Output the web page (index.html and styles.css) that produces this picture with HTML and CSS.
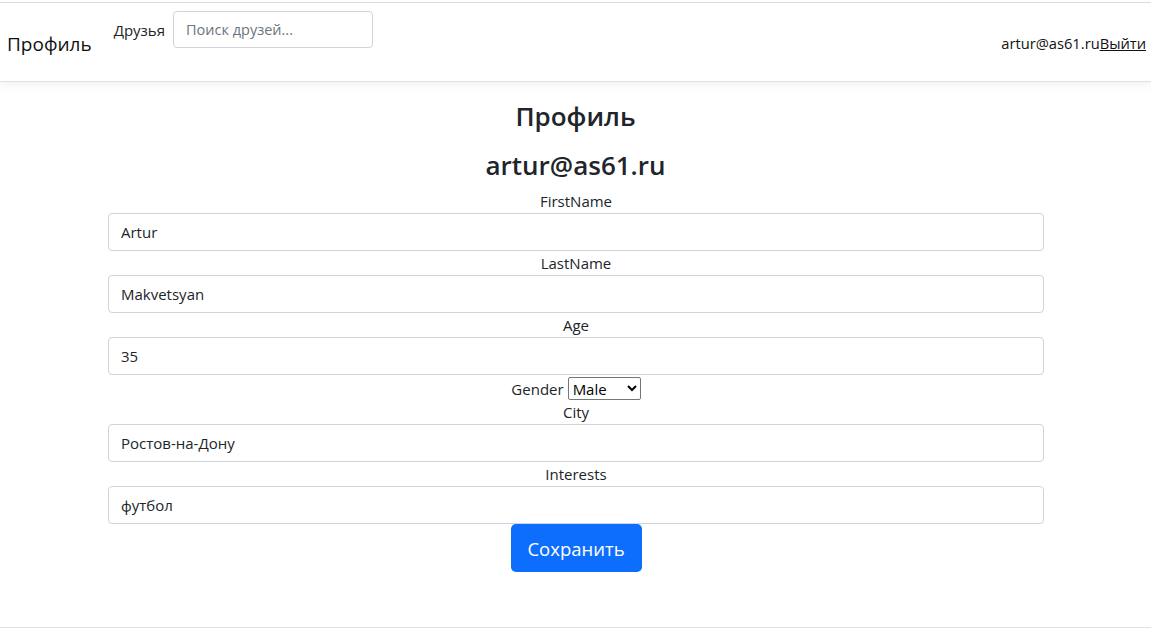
FILE: index.html
```html
<!DOCTYPE html>
<html lang="ru">
<head>
<meta charset="utf-8">
<title>Профиль</title>
<link rel="stylesheet" href="styles.css">
</head>
<body>
<header class="topbar">
  <div class="brand">Профиль</div>
  <nav class="nav">
    <a class="nav-link" href="#">Друзья</a>
    <input class="search" type="text" placeholder="Поиск друзей...">
  </nav>
  <div class="user">
    <span>artur@as61.ru</span><a class="logout" href="#">Выйти</a>
  </div>
</header>
<main class="content">
  <h2 class="title">Профиль</h2>
  <h2 class="title">artur@as61.ru</h2>
  <form class="form">
    <label class="label">FirstName</label>
    <input class="field" type="text" value="Artur">
    <label class="label">LastName</label>
    <input class="field" type="text" value="Makvetsyan">
    <label class="label">Age</label>
    <input class="field" type="text" value="35">
    <div class="gender-row">
      <span>Gender</span>
      <select class="select"><option>Male</option><option>Female</option></select>
    </div>
    <label class="label">City</label>
    <input class="field" type="text" value="Ростов-на-Дону">
    <label class="label">Interests</label>
    <input class="field" type="text" value="футбол">
    <button class="btn" type="button">Сохранить</button>
  </form>
</main>
<footer class="footer"></footer>
</body>
</html>
```
FILE: styles.css
```css
* { box-sizing: border-box; }
html, body { margin: 0; padding: 0; }
body {
  font-family: "Open Sans", "Noto Sans", sans-serif;
  font-size: 15px;
  color: #212529;
  background: #fff;
  padding-top: 2px;
}
.topbar {
  height: 80px;
  border-top: 1px solid #dcdcdc;
  border-bottom: 1px solid #dee2e6;
  box-shadow: 0 4px 8px rgba(0,0,0,0.05);
  display: flex;
  align-items: flex-start;
  padding: 0 5px 0 7px;
}
.brand {
  font-size: 19px;
  margin-top: 28px;
  line-height: 26px;
  color: #111;
}
.nav {
  display: flex;
  align-items: center;
  margin-left: 22px;
  margin-top: 8px;
  gap: 8px;
}
.nav-link { color: #222; text-decoration: none; font-size: 15px; }
.search {
  width: 200px;
  height: 37px;
  border: 1px solid #ced4da;
  border-radius: 4px;
  padding: 0 12px;
  font-family: inherit;
  font-size: 14.5px;
}
.search::placeholder { color: #6c757d; }
.user {
  margin-left: auto;
  margin-top: 30px;
  font-size: 14.7px;
  color: #111;
}
.logout { color: #111; text-decoration: underline; }
.content {
  padding: 18px 0 0;
  text-align: center;
}
.title {
  font-size: 26px;
  font-weight: 600;
  margin: 0;
  line-height: 33px;
  color: #212529;
}
.title + .title { margin-top: 16px; }
.form {
  width: 936px;
  margin: 7px auto 0 108px;
  display: flex;
  flex-direction: column;
  align-items: center;
}
.label {
  font-size: 15px;
  line-height: 24px;
  margin: 0;
}
.field {
  width: 100%;
  height: 38px;
  border: 1px solid #ced4da;
  border-radius: 4px;
  padding: 0 12px;
  font-family: inherit;
  font-size: 15px;
  color: #212529;
}
.gender-row {
  display: flex;
  align-items: center;
  gap: 4px;
  margin-top: 2px;
  height: 23px;
  font-size: 15px;
}
.select {
  width: 73px;
  height: 23px;
  font-family: inherit;
  font-size: 15px;
  border: 1px solid #767676;
  border-radius: 2px;
  background: #fff;
  color: #000;
}
.btn {
  margin-top: 0;
  width: 131px;
  height: 48px;
  background: #0d6efd;
  color: #fff;
  border: none;
  border-radius: 5px;
  font-family: inherit;
  font-size: 18.5px;
}
.footer {
  margin-top: 55px;
  border-top: 1px solid #dee2e6;
}
```
